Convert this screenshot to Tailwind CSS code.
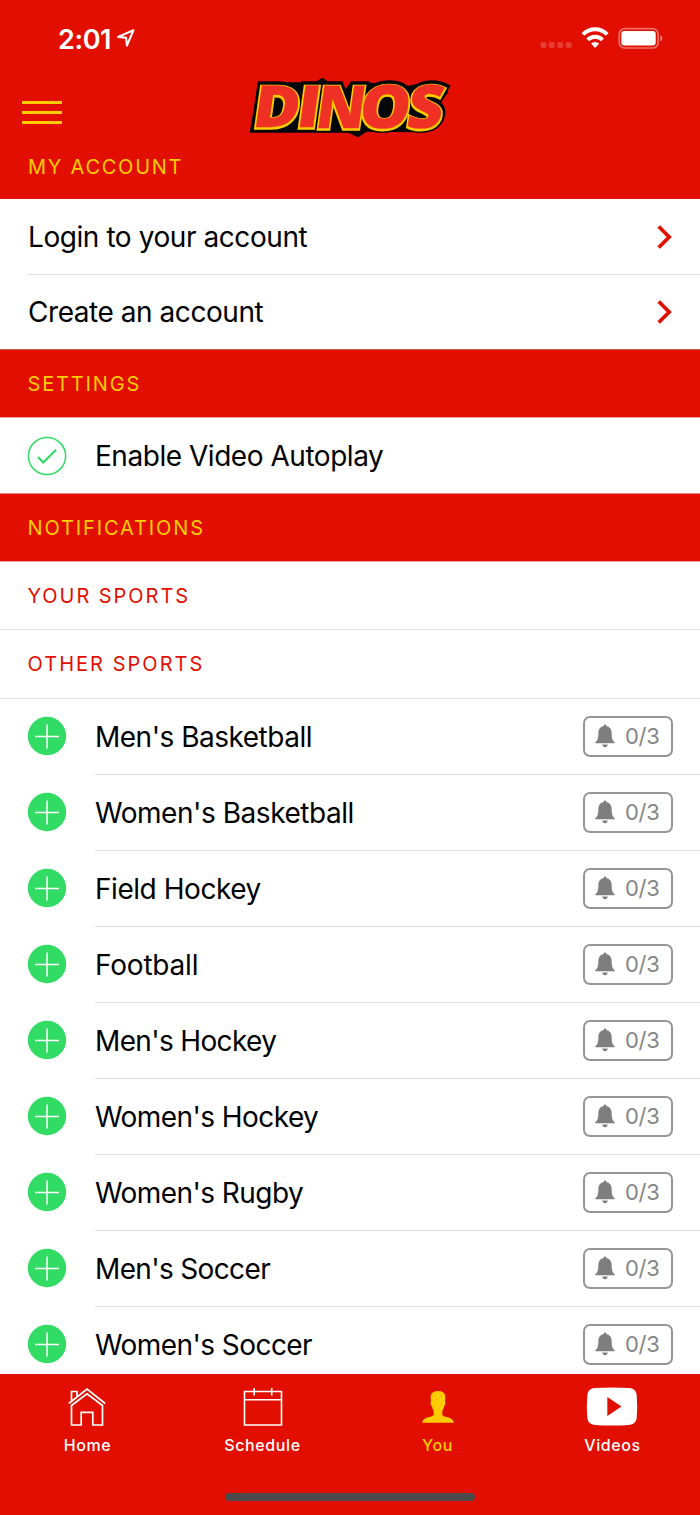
<!DOCTYPE html>
<html lang="en">
<head>
<meta charset="utf-8">
<title>Dinos</title>
<script src="https://cdn.jsdelivr.net/npm/@tailwindcss/browser@4"></script>
</head>
<body class="w-[700px] h-[1515px] overflow-hidden bg-white font-['Inter','Liberation_Sans',sans-serif] text-black">
<svg class="hidden">
  <symbol id="plus" viewBox="0 0 40 40"><circle cx="20" cy="20" r="19.2" fill="#32db64"/><path d="M8 20.500H32M20 8.500V32.500" stroke="#fff" stroke-width="1.5"/></symbol>
  <symbol id="bell" viewBox="0 0 20 24"><path d="M10 .5C10.900 .5 11.300 1.200 11.400 2C14.700 2.700 16.500 5.200 16.600 8.200C16.700 13.500 17.100 16.500 19.700 18.200V19.300H.3V18.200C2.900 16.500 3.300 13.500 3.400 8.200C3.500 5.200 5.300 2.700 8.600 2C8.700 1.200 9.100 .5 10 .5ZM7.300 20.500H12.700C12.500 22.200 11.500 23.200 10 23.200S7.500 22.200 7.300 20.500Z" fill="#7f7f7f"/></symbol>
  <symbol id="chev" viewBox="0 0 16 26"><path d="M1.700 2.500L12.200 13L1.700 23.500" fill="none" stroke="#e20e00" stroke-width="3.700"/></symbol>
</svg>
<div class="flex h-full flex-col">
  <header class="flex h-[199px] shrink-0 flex-col bg-[#e20e00]">
    <div class="flex h-[76px] items-center justify-between pl-[58px] pr-[37px]">
      <div class="flex items-center gap-[6px]">
        <span class="mt-[2px] text-[27px] font-semibold leading-none tracking-[-0.4px] text-white">2:01</span>
        <svg class="h-[18px] w-[18px]" viewBox="0 0 19 19"><path d="M1.200 8.300L17.300 1.300L10.500 17.500L9.600 9.200Z" fill="none" stroke="#fff" stroke-width="2.200" stroke-linejoin="round"/></svg>
      </div>
      <svg class="h-[24px] w-[124px]" viewBox="0 0 124 24">
        <g fill="#fff" fill-opacity=".2"><rect x="1.500" y="16" width="6" height="6" rx="2"/><rect x="9.800" y="16" width="6" height="6" rx="2"/><rect x="18.200" y="16" width="6" height="6" rx="2"/><rect x="26.700" y="16" width="6" height="6" rx="2"/></g>
        <g fill="none" stroke="#fff" stroke-width="4"><path d="M44 8.500A16.500 16.500 0 0 1 68.200 8.500"/><path d="M48.700 13.800A10.300 10.300 0 0 1 63.500 13.800"/></g>
        <path d="M56.100 22L52 17.600A6 6 0 0 1 60.200 17.600Z" fill="#fff"/>
        <rect x="80.200" y="2.700" width="39" height="19.300" rx="5.500" fill="none" stroke="#fff" stroke-opacity=".4" stroke-width="1.700"/>
        <rect x="82.300" y="5" width="34.400" height="14.600" rx="3" fill="#fff"/>
        <path d="M121.300 9V15.600Q123.400 14.400 123.400 12.300T121.300 9Z" fill="#fff" fill-opacity=".5"/>
      </svg>
    </div>
    <div class="flex h-[75px] pl-[22px]">
      <svg class="mt-[25px] h-[24px] w-10" viewBox="0 0 40 24"><path d="M0 1.500H40M0 11.500H40M0 21.500H40" stroke="#fc0" stroke-width="3"/></svg>
      <svg class="-mt-[11px] ml-[173px] h-[85px] w-[230px]" viewBox="0 0 690 255">
        <defs><g id="w" font-family="Open Sans" font-weight="800" stroke-linejoin="miter">
          <text font-size="174" transform="translate(49 187) skewX(-8)" textLength="140" lengthAdjust="spacingAndGlyphs">D</text>
          <text font-size="174" transform="translate(179 187) skewX(-8)" textLength="70" lengthAdjust="spacingAndGlyphs">I</text>
          <text font-size="178" transform="translate(237 189) skewX(-8)" textLength="147" lengthAdjust="spacingAndGlyphs">N</text>
          <text font-size="180" transform="translate(367 189) skewX(-8)" textLength="153" lengthAdjust="spacingAndGlyphs">O</text>
          <text font-size="180" transform="translate(510 189) skewX(-8)" textLength="108" lengthAdjust="spacingAndGlyphs">S</text>
        </g></defs>
        <path d="M70 52L240 52L262 38L325 80L347 52H390L520 62L592 48L640 82L618 110L625 170L560 202L395 200L369 217L340 203H44Z" fill="#040707"/>
        <use href="#w" fill="#040707" stroke="#040707" stroke-width="26"/>
        <g transform="translate(0 2)"><use href="#w" fill="#fc0" stroke="#fc0" stroke-width="11"/></g>
        <use href="#w" fill="#ee3124" stroke="#ee3124" stroke-width="1"/>
      </svg>
    </div>
    <h2 class="flex h-[32px] items-center pl-7 text-[20px] tracking-[1.75px] text-[#fc0]">MY ACCOUNT</h2>
  </header>
  <main class="flex h-[1175px] shrink-0 flex-col overflow-hidden text-[28px]">
    <div class="ml-[27px] flex h-[76px] shrink-0 items-center justify-between border-b border-[#dedede] pl-px pr-[27px]"><span class="tracking-[-0.43px]">Login to your account</span><svg class="h-[26px] w-4"><use href="#chev"/></svg></div>
    <div class="flex h-[74px] shrink-0 items-center justify-between pl-7 pr-[27px]"><span class="tracking-[-0.45px]">Create an account</span><svg class="h-[26px] w-4"><use href="#chev"/></svg></div>
    <h2 class="flex h-[68px] shrink-0 items-center border-t border-[#d05a50] bg-[#e20e00] pl-[27.500px] text-[20px] tracking-[1.85px] text-[#fc0]">SETTINGS</h2>
    <div class="flex h-[76px] shrink-0 items-center border-t border-[#f3a09a] pl-[27px] pt-px"><svg class="mr-7 size-10" viewBox="0 0 40 40" fill="none" stroke="#32db64"><circle cx="20" cy="20" r="18.600" stroke-width="1.500"/><path d="M11 21L16.200 26.500L29 13.700" stroke-width="2.200"/></svg><span class="tracking-[-0.46px]">Enable Video Autoplay</span></div>
    <h2 class="flex h-[68px] shrink-0 items-center border-t border-[#e98a84] bg-[#e20e00] pl-[27.500px] text-[20px] tracking-[1.88px] text-[#fc0]">NOTIFICATIONS</h2>
    <h3 class="flex h-[69px] shrink-0 items-center border-b border-t border-[#e3e3e3] border-t-[#f3a09a] pl-[27.500px] pt-px text-[20px] tracking-[1.95px] text-[#e20e00]">YOUR SPORTS</h3>
    <h3 class="flex h-[69px] shrink-0 items-center border-b border-[#e3e3e3] pl-[27.500px] text-[20px] tracking-[2.03px] text-[#e20e00]">OTHER SPORTS</h3>
    <div class="flex h-[76px] shrink-0 pl-[27px]"><svg class="mr-7 mt-[17px] size-10 shrink-0"><use href="#plus"/></svg><div class="flex grow items-center justify-between border-b border-[#dedede] pr-[27px]"><span class="tracking-[-0.5px]">Men's Basketball</span><span class="flex h-[41px] w-[90px] items-center rounded-[7px] border-2 border-[#969696] pl-[10px] text-[22px] text-[#858585]"><svg class="-mt-[2px] mr-[10px] h-6 w-5"><use href="#bell"/></svg><span class="tracking-[-0.3px]">0/3</span></span></div></div>
    <div class="flex h-[76px] shrink-0 pl-[27px]"><svg class="mr-7 mt-[17px] size-10 shrink-0"><use href="#plus"/></svg><div class="flex grow items-center justify-between border-b border-[#dedede] pr-[27px]"><span class="tracking-[-0.46px]">Women's Basketball</span><span class="flex h-[41px] w-[90px] items-center rounded-[7px] border-2 border-[#969696] pl-[10px] text-[22px] text-[#858585]"><svg class="-mt-[2px] mr-[10px] h-6 w-5"><use href="#bell"/></svg><span class="tracking-[-0.3px]">0/3</span></span></div></div>
    <div class="flex h-[76px] shrink-0 pl-[27px]"><svg class="mr-7 mt-[17px] size-10 shrink-0"><use href="#plus"/></svg><div class="flex grow items-center justify-between border-b border-[#dedede] pr-[27px]"><span class="tracking-[-0.45px]">Field Hockey</span><span class="flex h-[41px] w-[90px] items-center rounded-[7px] border-2 border-[#969696] pl-[10px] text-[22px] text-[#858585]"><svg class="-mt-[2px] mr-[10px] h-6 w-5"><use href="#bell"/></svg><span class="tracking-[-0.3px]">0/3</span></span></div></div>
    <div class="flex h-[76px] shrink-0 pl-[27px]"><svg class="mr-7 mt-[17px] size-10 shrink-0"><use href="#plus"/></svg><div class="flex grow items-center justify-between border-b border-[#dedede] pr-[27px]"><span class="tracking-[-0.2px]">Football</span><span class="flex h-[41px] w-[90px] items-center rounded-[7px] border-2 border-[#969696] pl-[10px] text-[22px] text-[#858585]"><svg class="-mt-[2px] mr-[10px] h-6 w-5"><use href="#bell"/></svg><span class="tracking-[-0.3px]">0/3</span></span></div></div>
    <div class="flex h-[76px] shrink-0 pl-[27px]"><svg class="mr-7 mt-[17px] size-10 shrink-0"><use href="#plus"/></svg><div class="flex grow items-center justify-between border-b border-[#dedede] pr-[27px]"><span class="tracking-[-0.65px]">Men's Hockey</span><span class="flex h-[41px] w-[90px] items-center rounded-[7px] border-2 border-[#969696] pl-[10px] text-[22px] text-[#858585]"><svg class="-mt-[2px] mr-[10px] h-6 w-5"><use href="#bell"/></svg><span class="tracking-[-0.3px]">0/3</span></span></div></div>
    <div class="flex h-[76px] shrink-0 pl-[27px]"><svg class="mr-7 mt-[17px] size-10 shrink-0"><use href="#plus"/></svg><div class="flex grow items-center justify-between border-b border-[#dedede] pr-[27px]"><span class="tracking-[-0.57px]">Women's Hockey</span><span class="flex h-[41px] w-[90px] items-center rounded-[7px] border-2 border-[#969696] pl-[10px] text-[22px] text-[#858585]"><svg class="-mt-[2px] mr-[10px] h-6 w-5"><use href="#bell"/></svg><span class="tracking-[-0.3px]">0/3</span></span></div></div>
    <div class="flex h-[76px] shrink-0 pl-[27px]"><svg class="mr-7 mt-[17px] size-10 shrink-0"><use href="#plus"/></svg><div class="flex grow items-center justify-between border-b border-[#dedede] pr-[27px]"><span class="tracking-[-0.57px]">Women's Rugby</span><span class="flex h-[41px] w-[90px] items-center rounded-[7px] border-2 border-[#969696] pl-[10px] text-[22px] text-[#858585]"><svg class="-mt-[2px] mr-[10px] h-6 w-5"><use href="#bell"/></svg><span class="tracking-[-0.3px]">0/3</span></span></div></div>
    <div class="flex h-[76px] shrink-0 pl-[27px]"><svg class="mr-7 mt-[17px] size-10 shrink-0"><use href="#plus"/></svg><div class="flex grow items-center justify-between border-b border-[#dedede] pr-[27px]"><span class="tracking-[-0.65px]">Men's Soccer</span><span class="flex h-[41px] w-[90px] items-center rounded-[7px] border-2 border-[#969696] pl-[10px] text-[22px] text-[#858585]"><svg class="-mt-[2px] mr-[10px] h-6 w-5"><use href="#bell"/></svg><span class="tracking-[-0.3px]">0/3</span></span></div></div>
    <div class="flex h-[76px] shrink-0 pl-[27px]"><svg class="mr-7 mt-[17px] size-10 shrink-0"><use href="#plus"/></svg><div class="flex grow items-center justify-between border-b border-[#dedede] pr-[27px]"><span class="tracking-[-0.57px]">Women's Soccer</span><span class="flex h-[41px] w-[90px] items-center rounded-[7px] border-2 border-[#969696] pl-[10px] text-[22px] text-[#858585]"><svg class="-mt-[2px] mr-[10px] h-6 w-5"><use href="#bell"/></svg><span class="tracking-[-0.3px]">0/3</span></span></div></div>
  </main>
  <nav class="flex h-[141px] shrink-0 flex-col items-center bg-[#e20e00]">
    <div class="grid h-[119px] w-full grid-cols-4 pt-3 text-[16px] font-medium leading-5 tracking-[0.600px] text-white">
      <div class="flex flex-col items-center gap-[9px]"><svg class="mr-px h-10 w-[38px]" viewBox="0 0 38 40" fill="none" stroke="#fff" stroke-width="1.700"><path d="M.8 17.500L19 3.200L37.200 17.500M3.500 15V5.500H9V10.500M3.500 19.500L19 7.700L34.500 19.500V39H24.800V26.300H13.200V39H3.500Z"/></svg>Home</div>
      <div class="flex flex-col items-center gap-[9px]"><svg class="h-10 w-10" viewBox="0 0 40 40" fill="none" stroke="#fff" stroke-width="1.600"><path d="M1.500 5.500H38.500V39H1.500ZM1.500 13.700H38.500M11.200 2V9.500M28.700 2V9.500"/></svg>Schedule</div>
      <div class="flex flex-col items-center gap-[9px] text-[#fc0]"><svg class="h-10 w-10" viewBox="0 0 40 40" fill="#fc0"><path d="M20 5C25.500 5 27.700 7.800 27.300 12.500L27 15.700C27.800 16.200 27.200 19.800 26 20.300C25.700 22.500 24.500 24.200 24.300 25.500V29C26 31.500 35.500 30.500 35.700 36.700H4.300C4.500 30.500 14 31.500 15.700 29V25.500C15.500 24.200 14.300 22.500 14 20.300C12.800 19.800 12.200 16.200 13 15.700L12.700 12.500C12.300 7.800 14.500 5 20 5Z"/></svg>You</div>
      <div class="flex flex-col items-center gap-[9px]"><svg class="mr-[2px] h-10 w-[52px]" viewBox="0 0 52 40"><path d="M9 2Q26 .9 43 2Q50 2.300 50.700 9Q51.700 20.500 50.700 32Q50 38.300 43 38.900Q26 40 9 38.900Q2 38.300 1.300 32Q.3 20.500 1.300 9Q2 2.300 9 2Z" fill="#fff"/><path d="M21.300 11V30L35.500 20.500Z" fill="#e20e00"/></svg>Videos</div>
    </div>
    <div class="h-2 w-[250px] rounded-full bg-[#4a4a4a]"></div>
  </nav>
</div>
</body>
</html>
